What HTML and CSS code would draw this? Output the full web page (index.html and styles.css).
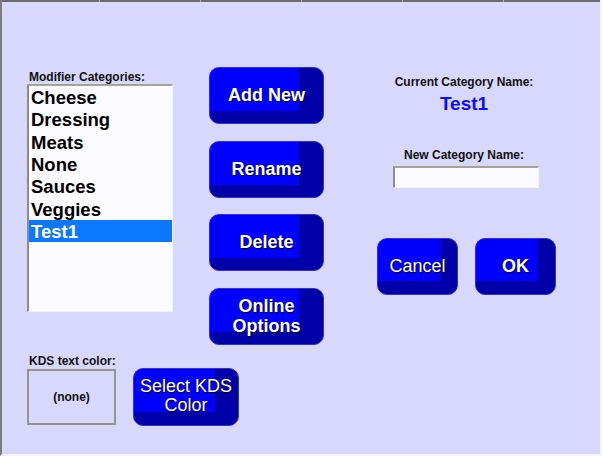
FILE: index.html
```html
<!DOCTYPE html>
<html>
<head>
<meta charset="utf-8">
<link rel="stylesheet" href="styles.css">
</head>
<body>
<div class="window">
  <div class="tabstrip">
    <span class="seg first"></span><span class="seg"></span><span class="seg"></span><span class="seg"></span><span class="seg"></span><span class="seg last"></span>
  </div>
  <div class="content">
    <div class="toprow">
      <div class="col-list">
        <div class="label">Modifier Categories:</div>
        <div class="listbox">
          <div class="item">Cheese</div>
          <div class="item">Dressing</div>
          <div class="item">Meats</div>
          <div class="item">None</div>
          <div class="item">Sauces</div>
          <div class="item">Veggies</div>
          <div class="item selected">Test1</div>
        </div>
      </div>
      <div class="col-buttons">
        <div class="btn big bold">Add New</div>
        <div class="btn big bold">Rename</div>
        <div class="btn big bold">Delete</div>
        <div class="btn big bold two">Online<br>Options</div>
      </div>
      <div class="col-right">
        <div class="label center">Current Category Name:</div>
        <div class="current">Test1</div>
        <div class="label center newlabel">New Category Name:</div>
        <div class="textinput"></div>
        <div class="actions">
          <div class="btn small">Cancel</div>
          <div class="btn small ok bold">OK</div>
        </div>
      </div>
    </div>
    <div class="bottomrow">
      <div class="kds">
        <div class="label tight">KDS text color:</div>
        <div class="swatch">(none)</div>
      </div>
      <div class="btn kdsbtn">Select KDS<br>Color</div>
    </div>
  </div>
</div>
</body>
</html>
```
FILE: styles.css
```css
html, body {
  margin: 0;
  padding: 0;
  background: #d8d8fc;
}
body {
  font-family: "Liberation Sans", Arial, sans-serif;
}
.window {
  width: 602px;
  height: 456px;
  box-sizing: border-box;
  background: #d8d8fc;
  border-left: 2px solid #7c7c7c;
  border-right: 2px solid #f4f4ff;
  border-bottom: 2px solid #f4f4ff;
  display: flex;
  flex-direction: column;
}
.tabstrip {
  height: 2px;
  display: flex;
  gap: 1px;
  background: #b0b0b8;
}
.seg {
  width: 100px;
  height: 2px;
  background: #6c6c6c;
}
.seg.first { width: 97px; }
.seg.last { flex: 1; }
.content {
  display: flex;
  flex-direction: column;
  padding-left: 25px;
}
.toprow {
  display: flex;
}
.label {
  font-size: 12px;
  font-weight: bold;
  line-height: 13px;
  color: #101010;
  white-space: nowrap;
}
.label.center {
  text-align: center;
  line-height: 14px;
}
.col-list {
  width: 146px;
  padding-top: 69px;
}
.col-list .label {
  padding-left: 2px;
}
.listbox {
  width: 146px;
  height: 228px;
  box-sizing: border-box;
  background: #fcfcff;
  border-top: 2px solid #a4a494;
  border-left: 2px solid #8c8c8c;
  border-right: 1px solid #f4f4ff;
  border-bottom: 1px solid #f4f4ff;
}
.item {
  height: 22.33px;
  line-height: 23px;
  font-size: 18.5px;
  font-weight: bold;
  color: #000;
  padding-left: 2px;
}
.item.selected {
  background: #0c78ff;
  color: #fff;
}
.col-buttons {
  margin-left: 36px;
  padding-top: 65px;
  display: flex;
  flex-direction: column;
  gap: 16.5px;
}
.btn {
  --rw: 24px;
  --bh: 12px;
  box-sizing: border-box;
  display: flex;
  align-items: center;
  justify-content: center;
  text-align: center;
  color: #fff;
  background:
    linear-gradient(#0000ff, #0000ff) 0 0 / calc(100% - var(--rw)) calc(100% - var(--bh)) no-repeat,
    #0000a8;
  border: 1px solid #3434c4;
  border-radius: 10px;
  text-shadow: 1px 1px 0 #000;
  font-size: 18px;
}
.btn.bold { font-weight: bold; }
.btn.big {
  width: 115px;
  height: 57px;
}
.btn.two {
  line-height: 20px;
}
.col-right {
  flex: 1;
  padding-left: 4px;
  padding-top: 73px;
}
.current {
  margin-top: 4px;
  text-align: center;
  font-size: 19px;
  line-height: 22px;
  font-weight: bold;
  color: #0c0cff;
}
.newlabel {
  margin-top: 33px;
}
.textinput {
  width: 146px;
  height: 22px;
  box-sizing: border-box;
  margin: 4px 0 0 65px;
  background: #fcfcff;
  border-top: 2px solid #a4a494;
  border-left: 2px solid #8c8c8c;
  border-right: 1px solid #f4f4ff;
  border-bottom: 1px solid #f4f4ff;
}
.actions {
  display: flex;
  gap: 17px;
  margin: 50px 0 0 49px;
}
.btn.small {
  --rw: 16px;
  --bh: 13px;
  width: 81px;
  height: 57px;
}
.btn.ok {
  --rw: 17px;
}
.bottomrow {
  display: flex;
  align-items: flex-end;
  margin-top: 10.5px;
}
.kds {
  display: flex;
  flex-direction: column;
}
.kds .label {
  padding-left: 2px;
  margin-bottom: 1px;
}
.swatch {
  width: 89px;
  height: 56px;
  box-sizing: border-box;
  border: 2px solid #949494;
  display: flex;
  align-items: center;
  justify-content: center;
  font-size: 12px;
  font-weight: bold;
  color: #101010;
}
.btn.kdsbtn {
  --rw: 23px;
  --bh: 13px;
  width: 106px;
  height: 58px;
  margin-left: 17px;
  margin-bottom: -1px;
  line-height: 19px;
  padding-bottom: 2px;
}
```
